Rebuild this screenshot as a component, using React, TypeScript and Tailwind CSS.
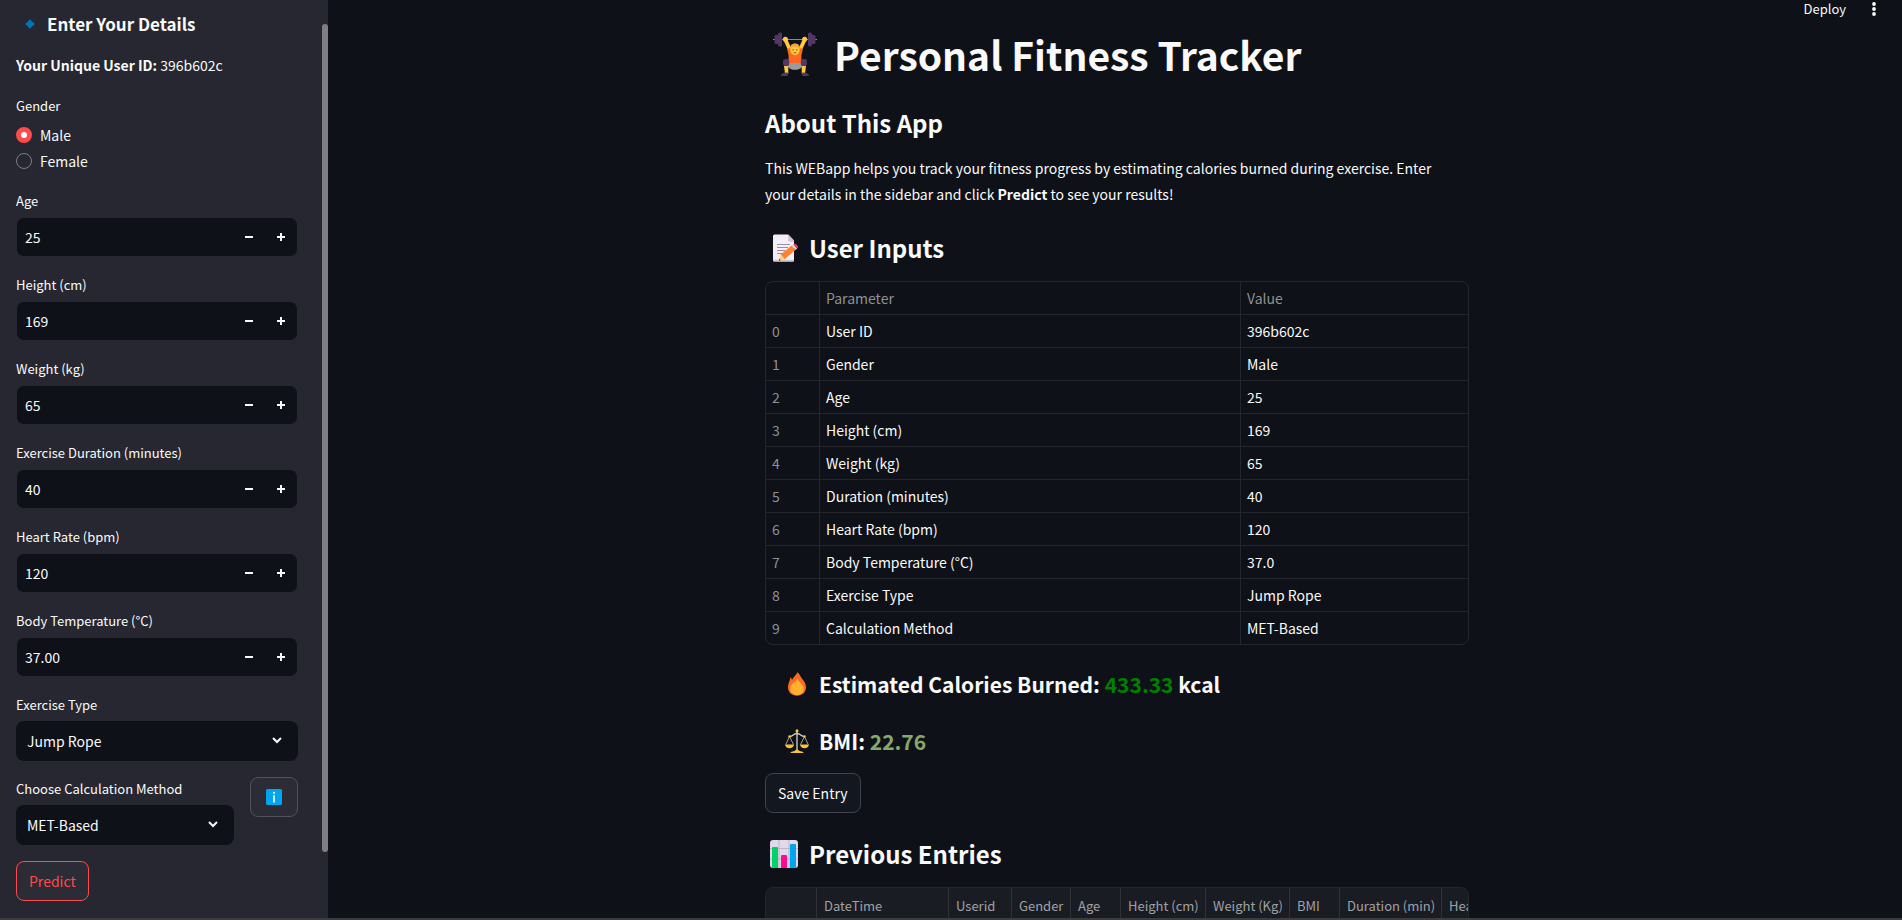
import React, { useState } from "react";

const FONT = "font-['Noto_Sans_CJK_SC','Noto_Sans_CJK_JP',sans-serif]";

function Diamond() {
  return (
    <svg viewBox="0 0 10 10" className="h-[10px] w-[10px]" aria-hidden="true">
      <path d="M5 .2 9.8 5 5 9.8.2 5Z" fill="#0074ba" />
    </svg>
  );
}

function WeightLifter() {
  return (
    <svg viewBox="0 0 44 44" className="h-11 w-11" aria-hidden="true">
      <path d="M0 7.500h44" stroke="#8a8a8a" strokeWidth="1.200" />
      <rect x="1.500" y="3" width="4.500" height="9" rx="1.500" fill="#533566" />
      <rect x="5" y=".5" width="4" height="14" rx="1.600" fill="#533566" />
      <rect x="38" y="3" width="4.500" height="9" rx="1.500" fill="#533566" />
      <rect x="35" y=".5" width="4" height="14" rx="1.600" fill="#533566" />
      <path d="M12.500 8 18 20M31.500 8 26 20" stroke="#ffc83d" strokeWidth="3.800" strokeLinecap="round" />
      <circle cx="12.400" cy="7.300" r="2.500" fill="#ffc83d" />
      <circle cx="31.600" cy="7.300" r="2.500" fill="#ffc83d" />
      <path d="M14.200 17.200 18 15.500l4 4.500 4-4.500 3.800 1.700-1.400 6.300V32H15.600v-8.500Z" fill="#ff6723" />
      <ellipse cx="22" cy="17.500" rx="4.800" ry="5.800" fill="#ffc83d" />
      <path d="M17.200 17.500c-.5-4 1.600-6 4.800-6s5.300 2 4.800 6c-1-2.200-2.800-3.200-4.800-3.200s-3.800 1-4.800 3.200Z" fill="#ff9d2e" />
      <path d="M20.200 17v1.600M23.800 17v1.600M20.800 20.700h2.400" stroke="#7d4533" strokeWidth=".9" />
      <path d="M11 33.700h4.300v8H12ZM28.700 33.700H33l-1 8h-3.300Z" fill="#ffc83d" />
      <path d="M15.600 31h12.800l.8 3.200c-1.200 2.600-4 3.600-7.200 3.600s-6-1-7.200-3.600Z" fill="#9b9b9b" />
      <rect x="10" y="27" width="6.200" height="7" rx="2.600" fill="#533566" />
      <rect x="27.800" y="27" width="6.200" height="7" rx="2.600" fill="#533566" />
      <path d="M7.800 44c.4-2.400 3-3.400 7-3.400V44ZM36.200 44c-.4-2.400-3-3.400-7-3.400V44Z" fill="#533566" />
    </svg>
  );
}

function Memo() {
  return (
    <svg viewBox="0 0 28 28" className="h-7 w-7" aria-hidden="true">
      <path d="M2.500.5h13.700L22 6.500v20a1 1 0 0 1-1 1H2.500a1.500 1.500 0 0 1-1.500-1.500V2A1.500 1.500 0 0 1 2.500.5Z" fill="#f3eef8" />
      <path d="M1 25.800V26a1.500 1.500 0 0 0 1.500 1.500H21a1 1 0 0 0 1-1v-.8Z" fill="#cdc4d6" />
      <path d="M16.200.5 22 6.500v1.300h-4.300a1.500 1.500 0 0 1-1.500-1.500Z" fill="#cdc4d6" />
      <path d="M5 10.500h13M5 13.500h11M5 16.500h8M5 19.500h6" stroke="#998ea4" strokeWidth="1" />
      <path d="M8.700 20.600 19.600 11.500l3.800 4.400-10.800 9.400Z" fill="#ff822d" />
      <path d="m8.700 20.600 3.900 4.700-5.800 1.500Z" fill="#ffce7c" />
      <path d="m7.400 24.600 1.100 1.700-1.700.5Z" fill="#402a32" />
      <path d="m19.600 11.500 1.800-1.500 3.800 4.400-1.800 1.500Z" fill="#d3d3d3" />
      <path d="m21.300 10.100.9-.6c1-.7 4.800 3 3.900 4l-1 .9Z" fill="#f92f60" />
    </svg>
  );
}

function Flame() {
  return (
    <svg viewBox="0 0 20 24" className="h-6 w-5" aria-hidden="true">
      <path d="M10.400.3c2.500 1.800 3 4.500 5 7 1.700 2.100 3.600 4.200 3.600 8C19 20.500 15 23.700 10 23.700s-9-3.200-9-8.400C1 11 3 9.600 3.300 5.200c1 .8 1.500 1.700 1.700 2.800C6.200 5 9 3.600 10.400.3Z" fill="#ff6723" />
      <path d="M10.300 6.500c.8 2.500 3 3.600 4.400 5.400 1.300 1.700 2.100 3.100 2.100 5 0 3.600-3 6-6.800 6s-6.800-2.400-6.800-6c0-2.300 1-3.700 2.500-5.400 1.600-1.700 3.700-2.700 4.600-5Z" fill="#ffb02e" />
    </svg>
  );
}

function Scales() {
  return (
    <svg viewBox="0 0 24 24" className="h-6 w-6" aria-hidden="true">
      <path d="M4.500 7.500.8 15.500M4.500 7.500l4 8M19.500 7.500l-4 8M19.500 7.500l3.700 8" stroke="#b0b0b0" strokeWidth=".9" fill="none" />
      <path d="M4.500 7.500C8.500 7.500 8 4.500 12 4.500s3.500 3 7.500 3M12 4v17" stroke="#d3d3d3" strokeWidth="1.300" fill="none" />
      <path d="M0 15.500h9c-.3 2.300-2 3.700-4.500 3.700S.3 17.800 0 15.500ZM15 15.500h9c-.3 2.300-2 3.700-4.500 3.700s-4.200-1.400-4.500-3.700Z" fill="#f9c23c" />
      <path d="M5.500 24c.3-1.300 1.200-1.600 3-1.700 1.700-.1 2-1.700 3.500-1.700s1.800 1.600 3.500 1.700c1.800.1 2.700.4 3 1.700Z" fill="#f9c23c" />
      <circle cx="12" cy="1.800" r="1.500" fill="#f9c23c" />
      <path d="M11.200 2h1.600v3h-1.600Z" fill="#f9c23c" />
      <circle cx="4.500" cy="7.500" r="1.200" fill="#f9c23c" />
      <circle cx="19.500" cy="7.500" r="1.200" fill="#f9c23c" />
    </svg>
  );
}

function BarChart() {
  return (
    <svg viewBox="0 0 28 28" className="h-7 w-7" aria-hidden="true">
      <rect width="28" height="28" rx="3" fill="#e1d8ec" />
      <path d="M9 0v28M19 0v28M0 8.500h28M0 19h28" stroke="#b4acbc" strokeWidth=".8" />
      <path d="M2 8a1 1 0 0 1 1-1h4a1 1 0 0 1 1 1v20H3a1 1 0 0 1-1-1Z" fill="#00d26a" />
      <path d="M11 16a1 1 0 0 1 1-1h4a1 1 0 0 1 1 1v12h-6Z" fill="#ff0a90" />
      <path d="M20 5a1 1 0 0 1 1-1h4a1 1 0 0 1 1 1v22a1 1 0 0 1-1 1h-5Z" fill="#00a6ed" />
    </svg>
  );
}

function InfoSquare() {
  return (
    <svg viewBox="0 0 16 16" className="h-4 w-4" aria-hidden="true">
      <rect width="16" height="16" rx="1.500" fill="#00a6ed" />
      <circle cx="8" cy="3.800" r="1.100" fill="#fff" />
      <path d="M7.200 6.200h1.600v7.300H7.200Z" fill="#fff" />
    </svg>
  );
}

function Minus() {
  return (
    <svg viewBox="0 0 8 8" className="h-2 w-2" aria-hidden="true">
      <path d="M0 3h8v2H0Z" fill="currentColor" />
    </svg>
  );
}

function Plus() {
  return (
    <svg viewBox="0 0 8 8" className="h-2 w-2" aria-hidden="true">
      <path d="M3 0h2v3h3v2H5v3H3V5H0V3h3Z" fill="currentColor" />
    </svg>
  );
}

function Chevron() {
  return (
    <svg viewBox="0 0 10 7" className="pointer-events-none absolute top-4 right-4 h-[7px] w-[10px]" aria-hidden="true">
      <path d="m1 1 4 4 4-4" fill="none" stroke="#fafafa" strokeWidth="2" />
    </svg>
  );
}

type NumberFieldProps = { id: string; label: string; initial: number; digits?: number };

function NumberField({ id, label, initial, digits = 0 }: NumberFieldProps) {
  const [value, setValue] = useState(initial.toFixed(digits));
  const step = (by: number) => setValue((v) => ((Number(v) || 0) + by).toFixed(digits));
  return (
    <div className="flex flex-col gap-1">
      <label htmlFor={id} className="text-[13px] leading-6">
        {label}
      </label>
      <div className="flex h-10 overflow-hidden rounded-lg border border-[#262730] bg-[#0e1117]">
        <input
          id={id}
          inputMode="decimal"
          value={value}
          onChange={(e) => setValue(e.target.value)}
          className="min-w-0 flex-1 bg-transparent px-2 text-sm outline-none"
        />
        <button type="button" aria-label={`Decrease ${label}`} onClick={() => step(-1)} className="flex w-8 items-center justify-center">
          <Minus />
        </button>
        <button type="button" aria-label={`Increase ${label}`} onClick={() => step(1)} className="flex w-8 items-center justify-center">
          <Plus />
        </button>
      </div>
    </div>
  );
}

type SelectFieldProps = { id: string; label: string; options: string[] };

function SelectField({ id, label, options }: SelectFieldProps) {
  return (
    <div className="flex min-w-0 flex-1 flex-col gap-1">
      <label htmlFor={id} className="text-[13px] leading-6 whitespace-nowrap">
        {label}
      </label>
      <div className="relative">
        <select id={id} className="block h-10 w-full appearance-none rounded-lg bg-[#0e1117] px-[11px] text-sm outline-none">
          {options.map((o) => (
            <option key={o}>{o}</option>
          ))}
        </select>
        <Chevron />
      </div>
    </div>
  );
}

function GenderField() {
  const [gender, setGender] = useState("Male");
  return (
    <fieldset className="flex flex-col">
      <legend className="mb-[5px] text-[13px] leading-6">Gender</legend>
      <div className="flex flex-col gap-0.5">
        {["Male", "Female"].map((g) => (
          <label key={g} className="flex items-center gap-2 text-sm leading-6">
            <input
              type="radio"
              name="gender"
              checked={gender === g}
              onChange={() => setGender(g)}
              className="h-4 w-4 appearance-none rounded-full border border-[#7c7c83] checked:border-5 checked:border-[#ff4b4b] checked:bg-white"
            />
            {g}
          </label>
        ))}
      </div>
    </fieldset>
  );
}

function Sidebar() {
  return (
    <aside className="flex w-[328px] shrink-0 overflow-hidden bg-[#262730]">
      <form className="flex flex-1 flex-col gap-4 pt-3 pr-6 pb-4 pl-4" onSubmit={(e) => e.preventDefault()}>
        <h2 className="flex items-center gap-3 pl-[9px] text-[17px] leading-6 font-bold">
          <Diamond />
          Enter Your Details
        </h2>
        <p className="text-sm leading-[26px]">
          <strong className="font-bold">Your Unique User ID:</strong> 396b602c
        </p>
        <GenderField />
        <NumberField id="age" label="Age" initial={25} />
        <NumberField id="height" label="Height (cm)" initial={169} />
        <NumberField id="weight" label="Weight (kg)" initial={65} />
        <NumberField id="duration" label="Exercise Duration (minutes)" initial={40} />
        <NumberField id="heart" label="Heart Rate (bpm)" initial={120} />
        <NumberField id="temp" label="Body Temperature (°C)" initial={37} digits={2} />
        <div className="flex">
          <SelectField id="exercise" label="Exercise Type" options={["Jump Rope", "Running", "Cycling"]} />
        </div>
        <div className="flex items-start gap-4">
          <SelectField id="method" label="Choose Calculation Method" options={["MET-Based", "Heart Rate-Based"]} />
          <button type="button" aria-label="About the methods" className="flex h-10 w-12 items-center justify-center rounded-lg border border-[#50515a] bg-[#2b2c36]">
            <InfoSquare />
          </button>
        </div>
        <button type="submit" className="h-10 self-start rounded-lg border border-[#ff4b4b] bg-[#2b2c36] px-3 text-sm text-[#ff4b4b]">
          Predict
        </button>
      </form>
      <div className="mt-6 mb-[66px] w-1.5 rounded-full bg-[#7f7e84]" />
    </aside>
  );
}

const inputs: [string, string][] = [
  ["User ID", "396b602c"],
  ["Gender", "Male"],
  ["Age", "25"],
  ["Height (cm)", "169"],
  ["Weight (kg)", "65"],
  ["Duration (minutes)", "40"],
  ["Heart Rate (bpm)", "120"],
  ["Body Temperature (°C)", "37.0"],
  ["Exercise Type", "Jump Rope"],
  ["Calculation Method", "MET-Based"],
];

const cell = "h-[33px] border-b border-l border-[#24262c] px-1.5 py-0 text-left font-normal group-last:h-8 group-last:border-b-0 first:border-l-0";

function InputsTable() {
  return (
    <div className="overflow-hidden rounded-lg border border-[#24262c]">
      <table className="w-full table-fixed border-separate border-spacing-0 text-sm">
        <colgroup>
          <col className="w-[53px]" />
          <col />
          <col className="w-[228px]" />
        </colgroup>
        <thead>
          <tr className="text-[#8f9093]">
            <th className={cell} />
            <th className={cell}>Parameter</th>
            <th className={cell}>Value</th>
          </tr>
        </thead>
        <tbody>
          {inputs.map(([name, value], i) => (
            <tr key={name} className="group">
              <td className={`${cell} text-[#8f9093]`}>{i}</td>
              <td className={cell}>{name}</td>
              <td className={cell}>{value}</td>
            </tr>
          ))}
        </tbody>
      </table>
    </div>
  );
}

const entryColumns: [string, string][] = [
  ["", "w-[50px]"],
  ["DateTime", "w-[132px]"],
  ["Userid", "w-[63px]"],
  ["Gender", "w-[59px]"],
  ["Age", "w-[50px]"],
  ["Height (cm)", "w-[85px]"],
  ["Weight (Kg)", "w-[84px]"],
  ["BMI", "w-[50px]"],
  ["Duration (min)", "w-[102px]"],
  ["Heart Rate (bpm)", "w-[130px]"],
];

function EntriesTable() {
  return (
    <div className="overflow-hidden rounded-lg border border-[#24262c] bg-[#1a1c24]">
      <table className="w-[805px] table-fixed border-separate border-spacing-0 text-[13px] text-[#a0a1a5]">
        <thead>
          <tr>
            {entryColumns.map(([name, width]) => (
              <th key={name} className={`${width} h-9 border-l border-[#30323a] px-[7px] py-0 text-left font-normal whitespace-nowrap first:border-l-0`}>
                {name}
              </th>
            ))}
          </tr>
        </thead>
      </table>
    </div>
  );
}

function Main() {
  return (
    <main className="relative min-w-0 flex-1 overflow-hidden pl-1">
      <div className="absolute top-0 right-0 flex items-center gap-6 pr-6">
        <button type="button" className="text-[13px] leading-[18px]">
          Deploy
        </button>
        <button type="button" aria-label="Menu" className="flex w-2 justify-center">
          <svg viewBox="0 0 4 14" className="h-3.5 w-1" fill="#fafafa" aria-hidden="true">
            <circle cx="2" cy="2" r="1.900" />
            <circle cx="2" cy="7" r="1.900" />
            <circle cx="2" cy="12" r="1.900" />
          </svg>
        </button>
      </div>
      <div className="mx-auto max-w-[704px] pt-[26px]">
        <h1 className="flex items-center gap-[17px] pl-2 text-[39px] leading-[56px] font-bold">
          <WeightLifter />
          Personal Fitness Tracker
        </h1>
        <h2 className="mt-[21px] text-2xl leading-10 font-bold">About This App</h2>
        <p className="mt-3 pr-4 text-sm leading-[26px]">
          This WEBapp helps you track your fitness progress by estimating calories burned during exercise. Enter your details in the sidebar and click{" "}
          <strong className="font-bold">Predict</strong> to see your results!
        </p>
        <h2 className="mt-[21px] mb-[13px] flex items-center gap-[9px] pl-[7px] text-2xl leading-10 font-bold">
          <Memo />
          User Inputs
        </h2>
        <InputsTable />
        <h3 className="mt-[21px] flex items-center gap-3 pl-[22px] text-[21px] leading-9 font-bold">
          <Flame />
          <span>
            Estimated Calories Burned: <span className="text-[#008000]">433.33</span> kcal
          </span>
        </h3>
        <h3 className="mt-[21px] flex items-center gap-2.5 pl-5 text-[21px] leading-9 font-bold">
          <Scales />
          <span>
            BMI: <span className="text-[#86a96a]">22.76</span>
          </span>
        </h3>
        <button type="button" className="mt-3.5 block h-10 rounded-lg border border-[#41444c] bg-[#131720] px-3 text-sm">
          Save Entry
        </button>
        <h2 className="mt-[21px] mb-[13px] flex items-center gap-[11px] pl-[5px] text-2xl leading-10 font-bold">
          <BarChart />
          Previous Entries
        </h2>
        <EntriesTable />
      </div>
    </main>
  );
}

export default function App() {
  return (
    <div className={`flex h-screen flex-col overflow-hidden border-b-2 border-[#3c3c3c] bg-[#0e1117] text-[#fafafa] ${FONT}`}>
      <div className="flex min-h-0 flex-1">
        <Sidebar />
        <Main />
      </div>
    </div>
  );
}
